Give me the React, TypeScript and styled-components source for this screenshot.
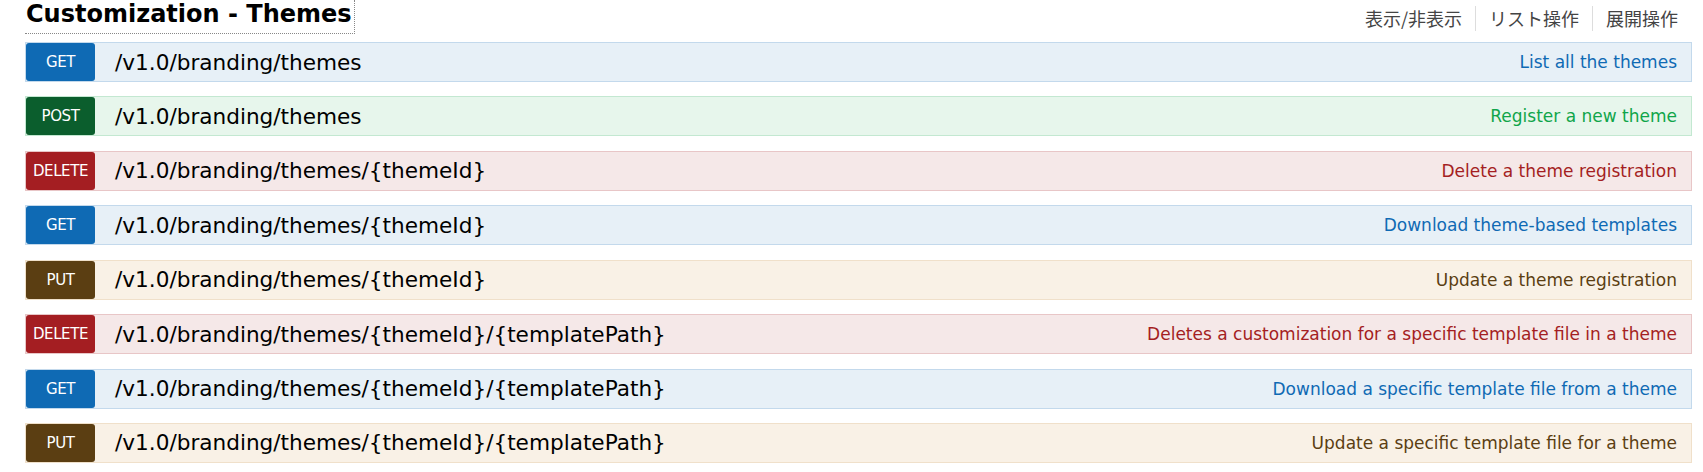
import React from 'react';
import styled, {createGlobalStyle} from 'styled-components';

type Method = 'GET' | 'POST' | 'DELETE' | 'PUT';

interface Operation {
    method: Method;
    path: string;
    summary: string;
}

const palette: Record<Method, {badge: string; bg: string; border: string; text: string}> = {
    GET: {badge: '#0f6ab4', bg: '#e7f0f7', border: '#c3d9ec', text: '#0f6ab4'},
    POST: {badge: '#0b5e2d', bg: '#e7f6ec', border: '#c3e8d1', text: '#10a54a'},
    DELETE: {badge: '#a41e22', bg: '#f5e8e8', border: '#e8c6c7', text: '#a41e22'},
    PUT: {badge: '#5b3e12', bg: '#f9f1e6', border: '#f0e0ca', text: '#5b3e12'},
};

const operations: Operation[] = [
    {method: 'GET', path: '/v1.0/branding/themes', summary: 'List all the themes'},
    {method: 'POST', path: '/v1.0/branding/themes', summary: 'Register a new theme'},
    {method: 'DELETE', path: '/v1.0/branding/themes/{themeId}', summary: 'Delete a theme registration'},
    {method: 'GET', path: '/v1.0/branding/themes/{themeId}', summary: 'Download theme-based templates'},
    {method: 'PUT', path: '/v1.0/branding/themes/{themeId}', summary: 'Update a theme registration'},
    {method: 'DELETE', path: '/v1.0/branding/themes/{themeId}/{templatePath}', summary: 'Deletes a customization for a specific template file in a theme'},
    {method: 'GET', path: '/v1.0/branding/themes/{themeId}/{templatePath}', summary: 'Download a specific template file from a theme'},
    {method: 'PUT', path: '/v1.0/branding/themes/{themeId}/{templatePath}', summary: 'Update a specific template file for a theme'},
];

const GlobalStyle = createGlobalStyle`
  body {
    margin: 0;
    background: #fff;
    font-family: "DejaVu Sans", "Noto Sans CJK JP", sans-serif;
  }
`;

const Resource = styled.div`
  padding: 0 11px 0 25px;
`;

const Heading = styled.div`
  display: flex;
  justify-content: space-between;
  align-items: flex-start;
  height: 42px;
`;

const Title = styled.h2`
  margin: 0;
  padding: 0 1px;
  width: 330px;
  height: 34px;
  box-sizing: border-box;
  border-bottom: 1px dotted #888;
  border-right: 1px dotted #888;
  font-size: 24px;
  font-weight: bold;
  line-height: 28px;
  color: #000;
  white-space: nowrap;
`;

const Options = styled.ul`
  display: flex;
  list-style: none;
  margin: 6px 14px 0 0;
  padding: 0;
`;

const Option = styled.li`
  padding: 0 13px;
  border-left: 1px solid #ddd;
  font-family: "Noto Sans CJK JP", sans-serif;
  font-size: 18px;
  line-height: 25px;
  color: #444;

  &:first-child {
    border-left: none;
  }

  &:last-child {
    padding-right: 0;
  }
`;

const List = styled.div`
  display: flex;
  flex-direction: column;
  gap: 14.43px;
`;

const Row = styled.div<{$method: Method}>`
  display: flex;
  align-items: stretch;
  height: 40px;
  box-sizing: border-box;
  background: ${p => palette[p.$method].bg};
  border: 1px solid ${p => palette[p.$method].border};
`;

const Badge = styled.span<{$method: Method}>`
  display: flex;
  align-items: center;
  justify-content: center;
  width: 69px;
  flex-shrink: 0;
  border-radius: 3px;
  background: ${p => palette[p.$method].badge};
  color: #fff;
  font-size: 15px;
  letter-spacing: -0.4px;
`;

const Path = styled.span`
  display: flex;
  align-items: center;
  padding-left: 20px;
  font-size: 21.6px;
  color: #000;
`;

const Summary = styled.span<{$method: Method}>`
  display: flex;
  align-items: center;
  margin-left: auto;
  padding-right: 14px;
  font-size: 17px;
  color: ${p => palette[p.$method].text};
`;

export default function App() {
    return (
        <>
            <GlobalStyle />
            <Resource>
                <Heading>
                    <Title>Customization - Themes</Title>
                    <Options>
                        <Option>表示/非表示</Option>
                        <Option>リスト操作</Option>
                        <Option>展開操作</Option>
                    </Options>
                </Heading>
                <List>
                    {operations.map((op, i) => (
                        <Row key={i} $method={op.method}>
                            <Badge $method={op.method}>{op.method}</Badge>
                            <Path>{op.path}</Path>
                            <Summary $method={op.method}>{op.summary}</Summary>
                        </Row>
                    ))}
                </List>
            </Resource>
        </>
    );
}
